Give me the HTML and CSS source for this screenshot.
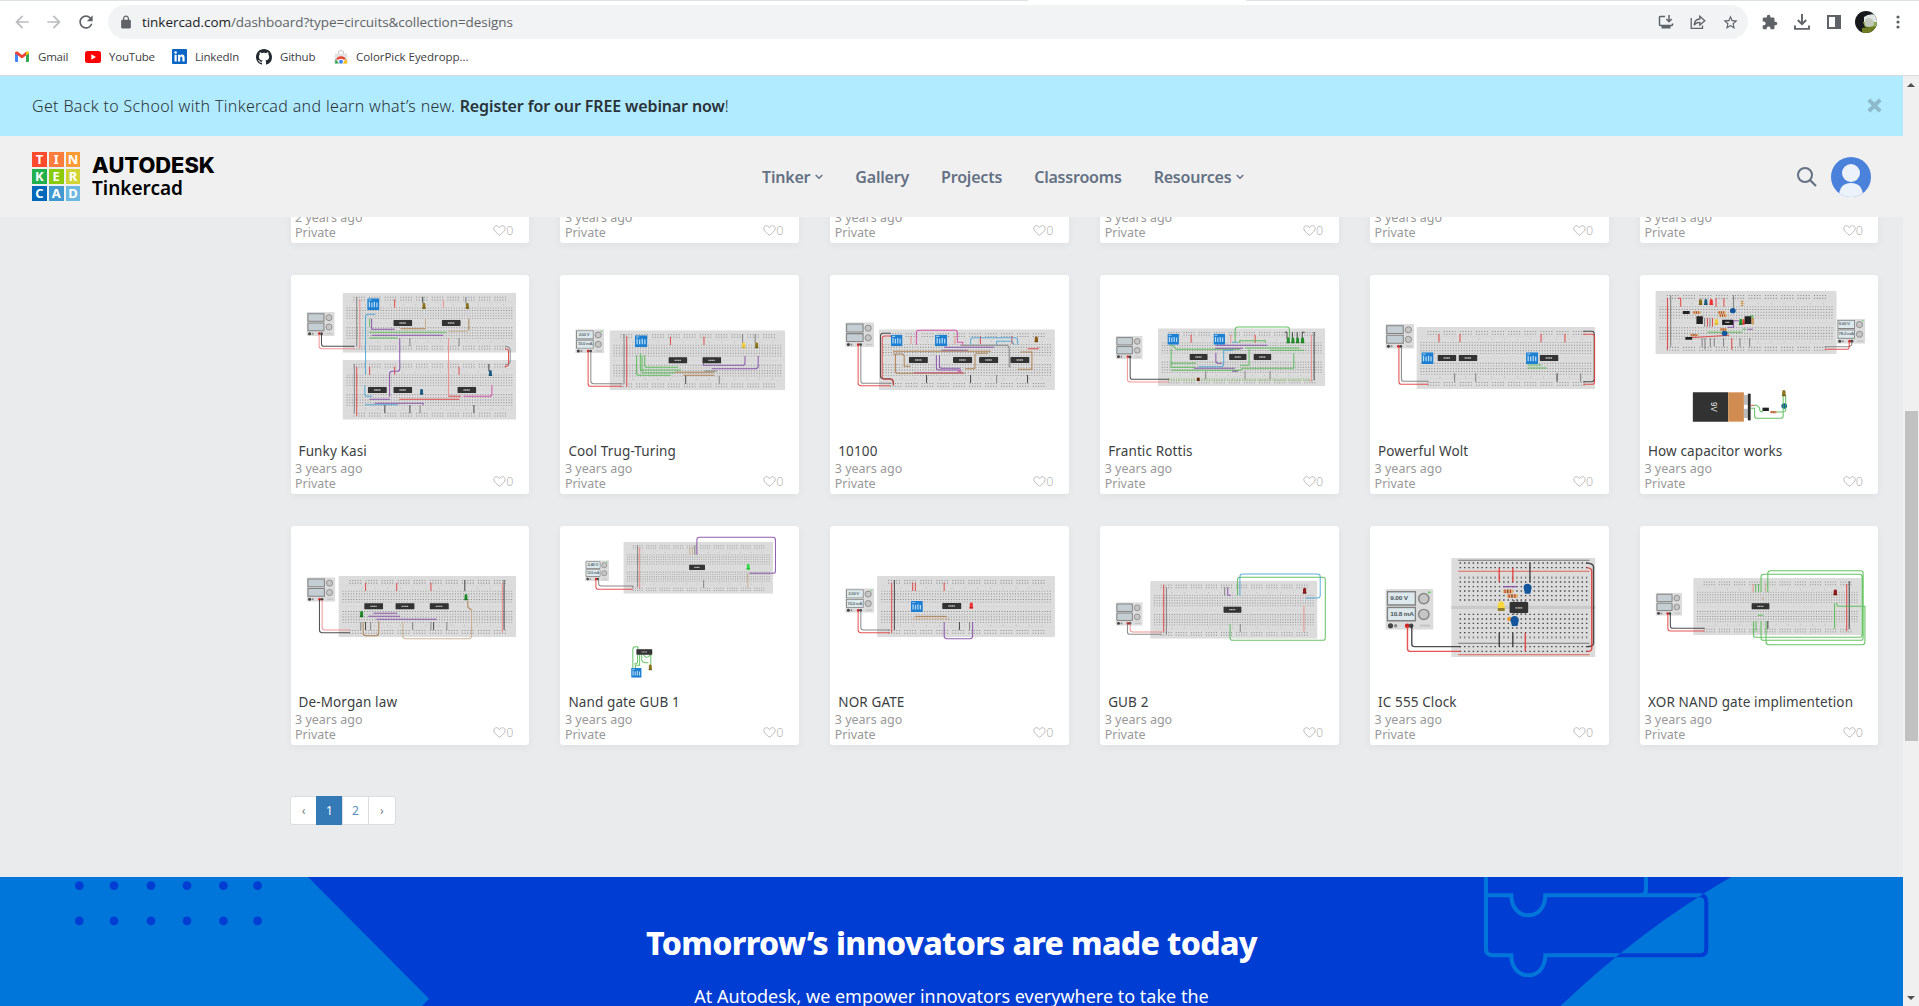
FILE: index.html
```html
<!DOCTYPE html>
<html lang="en">
<head>
<meta charset="utf-8">
<title>Dashboard | Tinkercad</title>
<link rel="stylesheet" href="styles.css">
</head>
<body>
<svg class="defs" aria-hidden="true">
  <symbol id="board" viewBox="0 0 512 180" preserveAspectRatio="none">
    <rect width="512" height="180" rx="3" fill="#dcdcdc"/>
    <path d="M12 28H500M12 150H500M12 90H500" stroke="#d3d3d3" stroke-width="1.5"/>
    <g fill="none" stroke="#a3a3a3" stroke-width="3">
      <path d="M12 45H502M12 61H502M12 77H502M12 113H502M12 137H502" stroke-dasharray="3 4.7"/>
      <path d="M12 53H502M12 69H502M12 105H502M12 121H502M12 129H502" stroke="#8a8a8a" stroke-dasharray="3 4.7"/>
      <path d="M32 13H485M32 21H485M32 161H485M32 169H485" stroke="#8e8e8e" stroke-dasharray="3 4.7 3 4.7 3 4.7 3 4.7 3 12.4"/>
      <path d="M66 36H480M66 146H480" stroke="#c2c2c2" stroke-width="4" stroke-dasharray="3 34"/>
    </g>
  </symbol>
  <symbol id="psu" viewBox="0 0 84 72" preserveAspectRatio="none">
    <rect width="84" height="72" rx="2" fill="#dcdcdc"/>
    <g fill="#c5cfd3" stroke="#828282" stroke-width="3"><path d="M4 5H52V28H4ZM4 33H52V56H4Z"/></g>
    <g fill="#c6c6c6" stroke="#858585" stroke-width="2.5"><circle cx="67" cy="17" r="9"/><circle cx="67" cy="45" r="9"/></g>
    <circle cx="9" cy="65" r="4.5" fill="#444"/><circle cx="18" cy="65" r="3" fill="#888"/>
    <circle cx="38" cy="65" r="4" fill="#c22"/><circle cx="45" cy="65" r="4" fill="#444"/>
    <path d="M60 65H78" stroke="#c6c6c6" stroke-width="4"/>
  </symbol>
  <symbol id="lit" viewBox="0 0 84 72" preserveAspectRatio="none">
    <use href="#psu" width="84" height="72"/>
    <path d="M5 6H51V27H5ZM5 34H51V55H5Z" fill="#dce8ec"/>
    <path d="M74 6H79" stroke="#6c6" stroke-width="3"/>
  </symbol>
  <symbol id="chip" viewBox="0 0 56 20" preserveAspectRatio="none">
    <path d="M3 1H54M3 19H54" stroke="#777" stroke-width="2" stroke-dasharray="3 4"/>
    <rect y="1" width="56" height="18" rx="2" fill="#333"/>
    <path d="M18 10H38" stroke="#bbb" stroke-width="4" stroke-dasharray="4 1"/>
  </symbol>
  <symbol id="dip" viewBox="0 0 34 34" preserveAspectRatio="none">
    <rect width="34" height="34" rx="1" fill="#1c7fd2"/>
    <path d="M6 10V26M13 12V26M20 10V26M27 12V26" stroke="#b9dcf5" stroke-width="3.5"/>
    <path d="M3 5H12" stroke="#9ccbf0" stroke-width="3"/>
  </symbol>
  <symbol id="led" viewBox="0 0 10 20" preserveAspectRatio="none">
    <path d="M1 6Q1 0 5 0T9 6V14H10V18H0V14H1Z"/>
    <path d="M0 15H10" stroke="#0003" stroke-width="3"/>
  </symbol>
  <symbol id="res" viewBox="0 0 24 10" preserveAspectRatio="none">
    <rect y="1" width="24" height="8" rx="3" fill="#d9b26c"/>
    <path d="M5 1V9M17 1V9" stroke="#c33" stroke-width="2.5"/><path d="M11 1V9" stroke="#733" stroke-width="2.5"/>
  </symbol>
  <symbol id="heart" viewBox="0 0 14 12">
    <path d="M7 11.2C3.5 8.4.8 6.4.8 3.8.8 2 2.1.8 3.8.8 5.2.8 6.3 1.600 7 3 7.700 1.600 8.800.8 10.200.8c1.700 0 3 1.200 3 3 0 2.600-2.700 4.600-6.200 7.400Z" fill="none" stroke="currentColor"/>
  </symbol>
  <symbol id="chevron" viewBox="0 0 8 6"><path d="M.7 1 4 4.300 7.300 1" fill="none" stroke="currentColor" stroke-width="1.400"/></symbol>
</svg>

<header class="browser">
  <div class="tabstrip"><i class="active-tab"></i></div>
  <div class="toolbar">
    <span class="tool faded"><svg width="20" height="20" viewBox="0 0 24 24"><path d="M20 11H7.830l5.590-5.590L12 4l-8 8 8 8 1.410-1.410L7.830 13H20z"/></svg></span>
    <span class="tool faded"><svg width="20" height="20" viewBox="0 0 24 24"><path d="M4 11h12.170l-5.590-5.590L12 4l8 8-8 8-1.410-1.410L16.170 13H4z"/></svg></span>
    <span class="tool"><svg width="20" height="20" viewBox="0 0 24 24"><path d="M17.650 6.350A7.958 7.958 0 0 0 12 4c-4.420 0-7.990 3.580-7.990 8s3.570 8 7.990 8c3.730 0 6.840-2.550 7.730-6h-2.080A5.990 5.990 0 0 1 12 18c-3.310 0-6-2.690-6-6s2.690-6 6-6c1.660 0 3.140.69 4.220 1.780L13 11h7V4z"/></svg></span>
    <div class="omnibox">
      <svg class="lock" width="12" height="14" viewBox="3 0 18 23"><path d="M18 8h-1V6c0-2.760-2.240-5-5-5S7 3.240 7 6v2H6c-1.100 0-2 .9-2 2v10c0 1.100.9 2 2 2h12c1.100 0 2-.9 2-2V10c0-1.100-.9-2-2-2zM15 8H9V6c0-1.660 1.340-3 3-3s3 1.340 3 3z"/></svg>
      <span class="url"><b>tinkercad.com</b>/dashboard?type=circuits&amp;collection=designs</span>
      <span class="tool"><svg width="16" height="16" viewBox="0 0 16 16"><path d="M7 2.500H2.200Q1.500 2.500 1.500 3.200V10.800Q1.500 11.500 2.200 11.500H13.800Q14.500 11.500 14.500 10.800V9.500M11 1V7.500M8.300 5 11 7.700 13.700 5" fill="none" stroke="currentColor" stroke-width="1.500"/><path d="M3.500 12H12.500V14.500H3.500Z"/></svg></span>
      <span class="tool"><svg width="16" height="16" viewBox="0 0 16 16"><path d="M1.200 4V14.300H12.500V11.500M4.200 11.200Q4.500 5.200 9.800 5V2.200L14.800 6.700 9.800 11V8.300Q6 8.200 4.200 11.200Z" fill="none" stroke="currentColor" stroke-width="1.300"/></svg></span>
      <span class="tool"><svg width="17" height="17" viewBox="0 0 24 24"><path d="M22 9.240l-7.190-.62L12 2 9.190 8.630 2 9.240l5.460 4.730L5.820 21 12 17.270 18.180 21l-1.630-7.030zM12 15.400l-3.760 2.270 1-4.280-3.320-2.880 4.380-.38L12 6.100l1.710 4.040 4.380.38-3.320 2.880 1 4.280z"/></svg></span>
    </div>
    <span class="tool"><svg width="16" height="16" viewBox="1 0 23 23"><path d="M20.500 11H19V7c0-1.100-.9-2-2-2h-4V3.500C13 2.120 11.880 1 10.500 1S8 2.120 8 3.500V5H4c-1.100 0-1.990.9-1.990 2v3.800H3.500c1.490 0 2.700 1.210 2.700 2.700s-1.210 2.700-2.700 2.700H2V20c0 1.100.9 2 2 2h3.800v-1.500c0-1.490 1.210-2.700 2.700-2.700s2.700 1.210 2.700 2.700V22H17c1.100 0 2-.9 2-2v-4h1.500c1.380 0 2.500-1.120 2.500-2.500S21.880 11 20.500 11z"/></svg></span>
    <span class="tool"><svg width="16" height="16" viewBox="0 0 16 16"><path d="M8 0V10M3.800 6 8 10.200 12.200 6M1 11.500V14.900H15V11.500" fill="none" stroke="currentColor" stroke-width="1.900"/></svg></span>
    <span class="tool"><svg width="14" height="14" viewBox="0 0 14 14"><path d="M0 0H14V14H0ZM2 2V12H8V2Z" fill-rule="evenodd"/></svg></span>
    <span class="tool"><svg width="22" height="22" viewBox="0 0 22 22"><clipPath id="face"><circle cx="11" cy="11" r="11"/></clipPath><g clip-path="url(#face)"><path fill="#17191c" d="M0 0H22V22H0Z"/><path fill="#dfe6e2" d="M9 6Q14 2 22 4V11H9Z"/><path fill="#8fae55" d="M8 11H22V16H10Z"/><path fill="#c3c8bd" d="M10 9Q14 5 18 9L19 14Q14 18 10 14Z"/><path fill="#6e7d21" d="M7 17 22 15V22H7Z"/></g></svg></span>
    <span class="tool"><svg width="4" height="16" viewBox="0 0 4 16"><circle cx="2" cy="3" r="1.600"/><circle cx="2" cy="8" r="1.600"/><circle cx="2" cy="13" r="1.600"/></svg></span>
  </div>
  <nav class="bookmarks">
    <span class="bm gm"><svg width="14" height="11" viewBox="0 0 14 11"><path fill="#4285f4" d="M0 2V10Q0 11 1 11H3V4Z"/><path fill="#34a853" d="M14 2V10Q14 11 13 11H11V4Z"/><path fill="#ea4335" d="M0 1.500Q1 0 2.500.6L7 4 11.500.6 11 4.500 7 7.500 3 4.500 0 2.500Z"/><path fill="#fbbc04" d="M11 1Q14 -.8 14 2.300L11 4.500Z"/></svg>Gmail</span>
    <span class="bm yt"><svg width="16" height="12" viewBox="0 0 16 12"><rect width="16" height="12" rx="2.500" fill="#f00"/><path fill="#fff" d="M6.300 3.300 11 6 6.300 8.700Z"/></svg>YouTube</span>
    <span class="bm li"><svg width="15" height="15" viewBox="0 0 15 15"><rect width="15" height="15" rx="1" fill="#0a66c2"/><g fill="#fff"><circle cx="3.600" cy="3.500" r="1.300"/><path d="M2.500 5.700H4.700V12.500H2.500ZM6 5.700H8.100V6.700Q8.700 5.500 10.200 5.500 12.600 5.500 12.600 8.500V12.500H10.400V9Q10.400 7.400 9.300 7.400 8.200 7.400 8.200 9V12.500H6Z"/></g></svg>LinkedIn</span>
    <span class="bm gh"><svg width="16" height="16" viewBox="0 0 16 16"><path fill="#24292f" d="M8 0C3.580 0 0 3.580 0 8c0 3.540 2.290 6.530 5.470 7.590.4.07.55-.17.55-.38 0-.19-.01-.82-.01-1.490-2.010.37-2.530-.49-2.690-.94-.09-.23-.48-.94-.82-1.130-.28-.15-.68-.52-.01-.53.63-.01 1.080.58 1.230.82.72 1.210 1.870.87 2.330.66.07-.52.28-.87.51-1.070-1.780-.2-3.640-.89-3.640-3.950 0-.87.31-1.590.82-2.150-.08-.2-.36-1.020.08-2.120 0 0 .67-.21 2.200.82.64-.18 1.320-.27 2-.27.68 0 1.360.09 2 .27 1.530-1.040 2.200-.82 2.200-.82.44 1.100.16 1.920.08 2.120.51.56.82 1.270.82 2.150 0 3.070-1.870 3.750-3.650 3.950.29.25.54.73.54 1.480 0 1.070-.01 1.930-.01 2.200 0 .21.15.46.55.38A8.013 8.013 0 0 0 16 8c0-4.420-3.580-8-8-8z"/></svg>Github</span>
    <span class="bm cp"><svg width="14" height="14" viewBox="0 0 14 14"><path d="M4.500 4V2Q4.500.7 7 .7T9.500 2V4" fill="none" stroke="#c4c4c4"/><path d="M1 3.500H13L14 13.500H0Z" fill="#e3e3e3"/><path fill="#ea4335" d="M2 9.500A5.500 5.500 0 0 1 12 9.500Z"/><path fill="#34a853" d="M1.500 9 5 13.500H1Z"/><path fill="#fbbc04" d="M12.500 9 8 13.500H13Z"/><circle cx="7" cy="11.500" r="2.700" fill="#fff"/><circle cx="7" cy="11.800" r="2" fill="#4285f4"/></svg>ColorPick Eyedropp...</span>
  </nav>
</header>

<div class="viewport">
  <div class="page">
    <div class="banner">
      <p>Get Back to School with Tinkercad and learn what’s new. <b>Register for our FREE webinar now</b>!</p>
      <svg class="close" width="15" height="15" viewBox="0 0 15 15"><path d="M1.800 1.800 13.200 13.200M13.200 1.800 1.800 13.200" stroke="#8db9ca" stroke-width="4"/></svg>
    </div>
    <div class="navbar">
      <div class="brand">
        <div class="tiles">
          <i class="t1">T</i><i class="t2">I</i><i class="t3">N</i>
          <i class="t4">K</i><i class="t5">E</i><i class="t6">R</i>
          <i class="t7">C</i><i class="t8">A</i><i class="t9">D</i>
        </div>
        <svg class="wordmark" width="126" height="49" viewBox="0 0 126 49">
          <text x="0" y="21" class="wm-a" textLength="123" lengthAdjust="spacingAndGlyphs">AUTODESK</text>
          <text x="0" y="43" class="wm-t" textLength="91" lengthAdjust="spacingAndGlyphs">Tinkercad</text>
        </svg>
      </div>
      <nav class="links">
        <a class="n1">Tinker<svg width="8" height="6"><use href="#chevron"/></svg></a>
        <a class="n2">Gallery</a>
        <a class="n3">Projects</a>
        <a class="n4">Classrooms</a>
        <a class="n5">Resources<svg width="8" height="6"><use href="#chevron"/></svg></a>
      </nav>
      <div class="account">
        <svg width="20" height="20" viewBox="0 0 20 20"><circle cx="8" cy="8" r="7" fill="none" stroke="#647084" stroke-width="2"/><path d="M13 13 19 19" stroke="#647084" stroke-width="2.200"/></svg>
        <svg width="40" height="40" viewBox="0 0 40 40"><clipPath id="av"><circle cx="20" cy="20" r="20"/></clipPath><g clip-path="url(#av)"><path fill="#4a81da" d="M0 0H40V40H0Z"/><g fill="#ebf2fb"><circle cx="20" cy="16" r="9"/><path d="M8 40Q8 26 20 26T32 40Z"/></g></g></svg>
      </div>
    </div>

    <main class="content">
      <div class="grid">
        <article class="card"><div class="meta">2 years ago<br>Private<span class="likes"><svg width="13" height="11"><use href="#heart"/></svg>0</span></div></article>
        <article class="card"><div class="meta">3 years ago<br>Private<span class="likes"><svg width="13" height="11"><use href="#heart"/></svg>0</span></div></article>
        <article class="card"><div class="meta">3 years ago<br>Private<span class="likes"><svg width="13" height="11"><use href="#heart"/></svg>0</span></div></article>
        <article class="card"><div class="meta">3 years ago<br>Private<span class="likes"><svg width="13" height="11"><use href="#heart"/></svg>0</span></div></article>
        <article class="card"><div class="meta">3 years ago<br>Private<span class="likes"><svg width="13" height="11"><use href="#heart"/></svg>0</span></div></article>
        <article class="card"><div class="meta">3 years ago<br>Private<span class="likes"><svg width="13" height="11"><use href="#heart"/></svg>0</span></div></article>

        <article class="card">
          <svg class="thumb" viewBox="32 15 704 498" preserveAspectRatio="none">
            <use href="#board" x="184" y="69" width="513" height="179"/><use href="#board" x="184" y="270" width="513" height="179"/>
            <use href="#psu" x="78" y="126" width="83" height="72"/>
            <path class="w gray" d="M226 81V228M383 204V228M528 204V228M219 282V430" /><path class="w black" d="M421 80V100M122 192V221Q122 229 130 229H219M309 405V429M383 405V429M572 405V429M616 282V304"/>
            <path class="w pink" d="M235 88V236M482 89V113M115 192V228Q115 236 123 236H220M497 204V379"/><path class="w red" d="M338 88V113M226 290V437M264 290V314M338 290V314M528 290V314M352 388H529M497 379H534M662 290Q674 290 674 282V242Q674 236 664 236"/>
            <path class="w gray" d="M664 229Q679 230 679 240V276Q678 284 664 284M548 82V100M413 405V429"/>
            <path class="w blue" d="M281 133H260Q252 133 252 141V314M250 346V372Q250 379 256 379H272M250 404H348"/>
            <path class="w green" d="M264 146V170M263 187H491M263 204H348"/><path class="w purple" d="M270 146V178H338M270 196H481M353 204V296Q353 304 345 304H332Q323 304 323 312V380M263 388H325M279 400H422V406"/>
            <path class="w tan" d="M429 146V176M497 184H550L557 178"/><path class="w brown" d="M355 176H429M557 146V180"/><path class="w magenta" d="M541 379H618Q625 379 625 372V346"/>
            <use href="#dip" x="257" y="85" width="36" height="35"/>
            <use href="#chip" x="334" y="149" width="56" height="20"/><use href="#chip" x="477" y="149" width="56" height="20"/><use href="#chip" x="259" y="350" width="56" height="20"/><use href="#chip" x="334" y="350" width="56" height="20"/><use href="#chip" x="523" y="350" width="56" height="20"/>
            <g fill="#8a7420"><use href="#led" x="419" y="98" width="11" height="21"/><use href="#led" x="547" y="98" width="11" height="21"/></g><g fill="#1f5f87"><use href="#led" x="615" y="300" width="11" height="20"/><use href="#led" x="412" y="356" width="11" height="20"/></g>
          </svg>
          <h3>Funky Kasi</h3><div class="meta">3 years ago<br>Private<span class="likes"><svg width="13" height="11"><use href="#heart"/></svg>0</span></div>
        </article>

        <article class="card">
          <svg class="thumb" viewBox="831 15 704 498" preserveAspectRatio="none">
            <use href="#board" x="977" y="181" width="519" height="180"/><use href="#lit" x="876" y="178" width="85" height="72"/>
            <text class="lcd" x="886" y="199">2.00 V</text><text class="lcd" x="884" y="226">15.0 mA</text>
            <path class="w gray" d="M922 244V333Q922 341 930 341H1015M1020 192V341M1370 192V220M1407 192V220M1301 317V341"/><path class="w black" d="M1202 317V341"/>
            <path class="w red" d="M914 244V341Q914 349 922 349H1015M1028 199V350M1157 200V225M1256 200V225"/>
            <path class="w green" d="M1057 256V308Q1057 316 1065 316H1158M1068 250V296L1075 308H1170M1073 256V300H1188M1081 256V284Q1081 292 1089 292H1180"/>
            <path class="w brown" d="M1170 307H1286M1195 316H1286"/><path class="w gray" d="M1257 303H1294"/><path class="w purple" d="M1254 280V286H1370Q1377 286 1377 278V258M1279 296H1409Q1416 296 1416 288V258"/>
            <use href="#dip" x="1052" y="196" width="37" height="35"/><use href="#chip" x="1151" y="261" width="56" height="20"/><use href="#chip" x="1251" y="261" width="56" height="20"/>
            <use href="#led" x="1367" y="217" width="12" height="20" fill="#f2cf3a"/><use href="#led" x="1406" y="217" width="11" height="20" fill="#8a7420"/>
          </svg>
          <h3>Cool Trug-Turing</h3><div class="meta">3 years ago<br>Private<span class="likes"><svg width="13" height="11"><use href="#heart"/></svg>0</span></div>
        </article>

        <article class="card">
          <svg class="thumb" viewBox="33 15 704 498" preserveAspectRatio="none">
            <use href="#board" x="177" y="178" width="520" height="182"/><use href="#psu" x="78" y="157" width="85" height="74"/>
            <path class="w black" d="M212 190H190Q182 190 182 198V318Q182 326 190 326H212L220 334V346M318 315V339M448 315V339M616 315V339"/><path class="w gray" d="M124 225V332Q124 340 132 340H214M525 315V339M558 226H418M553 226Q562 226 562 236V290H566"/>
            <path class="w red" d="M116 225V339Q116 347 124 347H212M216 198H195Q187 198 187 206V320Q187 328 196 328H218L221 346M477 198V222M570 198V222M616 236H647V232"/><path class="w pink" d="M272 198V222M402 198V222M360 198V222"/>
            <path class="w magenta" d="M288 224V189Q288 181 296 181H402Q409 181 409 189V217H425V225M280 308H425L410 302"/>
            <path class="w purple" d="M370 232H517M362 241H440M347 256V292Q347 300 355 300H420M356 256V287Q356 295 364 295H418"/>
            <path class="w brown" d="M219 244H508M226 252V302Q226 310 234 310H432M219 252H245Q252 252 252 260V289H270M462 250H500M461 252V296M432 296H461M587 298H629V246H595"/>
            <path class="w blue" d="M448 224V211Q448 203 456 203H580Q587 203 587 211V224M525 224V214H570L577 224"/>
            <use href="#dip" x="213" y="194" width="34" height="35"/><use href="#dip" x="343" y="194" width="36" height="35"/>
            <use href="#chip" x="266" y="260" width="56" height="20"/><use href="#chip" x="396" y="260" width="57" height="20"/><use href="#chip" x="473" y="260" width="57" height="20"/><use href="#chip" x="565" y="260" width="57" height="20"/>
            <use href="#led" x="636" y="199" width="12" height="20" fill="#8a5c16"/>
          </svg>
          <h3>10100</h3><div class="meta">3 years ago<br>Private<span class="likes"><svg width="13" height="11"><use href="#heart"/></svg>0</span></div>
        </article>

        <article class="card">
          <svg class="thumb" viewBox="828 15 704 498" preserveAspectRatio="none">
            <use href="#board" x="999" y="175" width="494" height="174"/><use href="#psu" x="874" y="198" width="80" height="69"/>
            <path d="M1030 329H1450" stroke="#9fc27a" stroke-width="10" stroke-dasharray="3 4.500" opacity=".7"/>
            <path class="w black" d="M917 262V320Q917 328 925 328H1032M1374 187H1380V206M1396 187V206M1410 187V206M1432 187H1425V206M1460 186V330"/><path class="w gray" d="M1140 304V328M1256 304V328M1330 304V328"/>
            <path class="w pink" d="M909 262V328Q909 336 917 336H1032M1214 194V218M1452 194V336"/><path class="w red" d="M1097 194V218M1286 194V218"/>
            <path class="w green" d="M1227 217V179Q1227 171 1235 171H1380Q1387 171 1387 179V206M1240 218V212H1316V218M1034 227H1044L1053 238H1242M1257 234H1417M1329 241H1431M1038 236V280H1112M1038 240V292H1110M1038 301H1242L1248 295H1400V250M1268 238V286H1242"/>
            <path class="w purple" d="M1170 226H1322M1168 235H1250M1170 248V272Q1170 280 1178 280H1189M1105 295H1226M1218 304H1235"/><path class="w blue" d="M1222 241H1193V282Q1193 290 1186 290H1118M1218 217H1236"/>
            <use href="#dip" x="1027" y="191" width="34" height="33"/><use href="#dip" x="1163" y="191" width="34" height="33"/>
            <use href="#chip" x="1092" y="251" width="54" height="20"/><use href="#chip" x="1209" y="251" width="52" height="20"/><use href="#chip" x="1281" y="251" width="53" height="20"/>
            <g fill="#22902b"><use href="#led" x="1378" y="202" width="11" height="20"/><use href="#led" x="1392" y="202" width="11" height="20"/><use href="#led" x="1406" y="202" width="11" height="20"/><use href="#led" x="1420" y="202" width="12" height="20"/></g><path fill="#621" d="M1114 323H1122V333H1114Z"/>
          </svg>
          <h3>Frantic Rottis</h3><div class="meta">3 years ago<br>Private<span class="likes"><svg width="13" height="11"><use href="#heart"/></svg>0</span></div>
        </article>

        <article class="card">
          <svg class="thumb" viewBox="27 15 668 498" preserveAspectRatio="none">
            <use href="#board" x="157" y="171" width="501" height="186"/><use href="#psu" x="70" y="162" width="81" height="74"/>
            <path class="w gray" d="M115 230V326Q115 334 123 334H191M264 310V335M323 310V335M617 310V335"/><path class="w black" d="M551 310V335M624 184H648Q655 184 655 192V327Q655 335 648 335H624"/>
            <path class="w red" d="M108 230V335Q108 343 116 343H191M220 192V217M279 192V217M506 192V217M573 192V217M624 193H648Q656 193 656 201V335Q656 343 648 343H624"/><path class="w green" d="M468 285H507M468 294H522"/>
            <use href="#dip" x="171" y="247" width="34" height="35"/><use href="#dip" x="464" y="247" width="34" height="35"/>
            <use href="#chip" x="216" y="254" width="53" height="20"/><use href="#chip" x="275" y="254" width="53" height="20"/><use href="#chip" x="502" y="254" width="53" height="20"/>
          </svg>
          <h3>Powerful Wolt</h3><div class="meta">3 years ago<br>Private<span class="likes"><svg width="13" height="11"><use href="#heart"/></svg>0</span></div>
        </article>

        <article class="card">
          <svg class="thumb" viewBox="785 15 668 498" preserveAspectRatio="none">
            <use href="#board" x="828" y="63" width="508" height="189"/><use href="#lit" x="1336" y="146" width="80" height="75"/>
            <text class="lcd" x="1341" y="166">9.00 V</text><text class="lcd" x="1341" y="195">78.2 mA</text>
            <path class="w gray" d="M871 76V230M1047 76V116M959 204V230M967 204V238M982 204V230M993 204V230M1019 204V230M1065 204V230M1092 204V230M966 144V170M981 144V170M1378 214V224Q1376 230 1366 230H1302"/>
            <path class="w red" d="M862 84V239M892 85H899V110M998 85V110M1020 85V110M1042 204V239M974 144V170M988 144V170M1371 214V230Q1371 238 1362 238H1302M925 203L1035 196"/>
            <path class="w green" d="M974 187H1072M1092 137H1101V150M1072 178H1083"/><path class="w purple" d="M1062 152H1047V172H1030M1086 178H1101"/>
            <g fill="#8a7420"><use href="#led" x="949" y="87" width="11" height="20"/></g><use href="#led" x="964" y="87" width="11" height="20" fill="#1f5f87"/><use href="#led" x="979" y="87" width="11" height="20" fill="#f33"/><use href="#led" x="993" y="146" width="12" height="21" fill="#f2cf3a"/><use href="#led" x="1062" y="146" width="11" height="21" fill="#22902b"/><use href="#led" x="1071" y="147" width="8" height="19" fill="#f33"/>
            <path fill="#222" d="M905 123H924V132H905ZM912 201H931V209H912ZM943 139H961V162H943ZM1078 139H1097V162H1078ZM1015 149H1046V165H1015Z"/><path d="M1024 157H1036" stroke="#aaa" stroke-width="4"/>
            <use href="#res" x="932" y="123" width="24" height="9"/><use href="#res" x="1002" y="123" width="24" height="9"/><use href="#res" x="1005" y="132" width="24" height="9"/><use href="#res" x="925" y="191" width="24" height="9"/><use href="#res" x="1008" y="174" width="22" height="9"/><path d="M1071 92V110M1101 145V164" stroke="#c98f43" stroke-width="7" stroke-dasharray="4 2"/>
            <g fill="#14569c"><circle cx="1045" cy="122" r="8"/><circle cx="1022" cy="190" r="8"/><circle cx="1189" cy="408" r="8"/></g>
            <path fill="#323232" d="M933 367H1032V455H933Z"/><path fill="#d18d51" d="M1032 367H1076V455H1032Z"/><path fill="#bbb" d="M1076 375H1087V404H1076ZM1076 416H1087V444H1076Z"/><path fill="#2b2b2b" d="M1087 371H1095V451H1087Z"/>
            <text class="nine" transform="translate(983 411) rotate(90)">9V</text>
            <path class="w red" d="M1095 406H1105"/><path class="w green" d="M1103 406H1112L1120 414V420Q1122 426 1130 426M1095 415H1106V437Q1106 445 1114 445H1178Q1186 445 1186 437V378M1193 378V420Q1192 426 1184 426H1168"/>
            <path fill="#222" d="M1128 413H1146V423H1128Z"/><use href="#res" x="1149" y="422" width="20" height="9"/><use href="#led" x="1182" y="360" width="12" height="21" fill="#8a7420"/>
          </svg>
          <h3>How capacitor works</h3><div class="meta">3 years ago<br>Private<span class="likes"><svg width="13" height="11"><use href="#heart"/></svg>0</span></div>
        </article>

        <article class="card">
          <svg class="thumb" viewBox="32 18 704 498" preserveAspectRatio="none">
            <use href="#board" x="172" y="168" width="525" height="183"/><use href="#psu" x="78" y="172" width="85" height="73"/>
            <path class="w black" d="M116 240V330Q116 338 124 338H206M545 180V214M453 306V330M252 306V330M661 180V330"/><path class="w gray" d="M238 306V330M267 306V330M391 306V330M445 306V330M492 306V330"/>
            <path class="w pink" d="M124 240V322Q124 330 132 330H206M656 188V338"/><path class="w red" d="M252 188V213M344 188V213M445 188V213"/>
            <path class="w purple" d="M275 280H346M260 289H354M284 298H462"/><path class="w brown" d="M245 306V339Q245 347 253 347H283Q291 347 291 339V304M554 242V262L565 270"/><path class="w tan" d="M362 306V348Q362 356 370 356H557Q565 356 565 348V266"/>
            <use href="#chip" x="248" y="249" width="56" height="20"/><use href="#chip" x="340" y="249" width="57" height="20"/><use href="#chip" x="441" y="249" width="57" height="20"/>
            <g fill="#1e8a2a"><use href="#led" x="235" y="272" width="11" height="22"/><use href="#led" x="543" y="222" width="11" height="21"/></g>
          </svg>
          <h3>De-Morgan law</h3><div class="meta">3 years ago<br>Private<span class="likes"><svg width="13" height="11"><use href="#heart"/></svg>0</span></div>
        </article>

        <article class="card">
          <svg class="thumb" viewBox="831 18 704 498" preserveAspectRatio="none">
            <use href="#board" x="1018" y="66" width="442" height="155"/><use href="#lit" x="905" y="121" width="71" height="62"/>
            <text class="lcd" x="912" y="139">2.40 V</text><text class="lcd small" x="911" y="163">12.0 mA</text>
            <path class="w gray" d="M1060 76V202M1255 181V203M1229 76V104M945 178V190Q945 198 953 198H1046V204"/><path class="w red" d="M937 178V200Q937 208 945 208H1046"/><path class="w pink" d="M1066 82V208"/>
            <path class="w tan" d="M1214 82V104M1222 82V104M1385 160V203"/><path class="w purple" d="M1235 104V60Q1235 52 1243 52H1459Q1467 52 1467 60V152Q1467 160 1459 160H1390"/>
            <use href="#chip" x="1212" y="133" width="47" height="18"/><use href="#led" x="1381" y="131" width="11" height="20" fill="#2fdc46"/>
            <path class="w green" d="M1061 390V380H1053Q1046 380 1046 388V444M1050 432Q1060 432 1060 424V404M1054 444V436H1066V404M1072 404V418Q1074 428 1084 428H1092M1078 404Q1084 416 1092 410L1099 404V436"/>
            <use href="#chip" x="1056" y="387" width="48" height="18"/><use href="#dip" x="1041" y="444" width="31" height="29"/><use href="#led" x="1092" y="433" width="11" height="20" fill="#8a7420"/>
          </svg>
          <h3>Nand gate GUB 1</h3><div class="meta">3 years ago<br>Private<span class="likes"><svg width="13" height="11"><use href="#heart"/></svg>0</span></div>
        </article>

        <article class="card">
          <svg class="thumb" viewBox="33 18 704 498" preserveAspectRatio="none">
            <use href="#board" x="172" y="168" width="525" height="183"/><use href="#lit" x="78" y="205" width="85" height="73"/>
            <text class="lcd" x="87" y="226">2.00 V</text><text class="lcd" x="85" y="254">15.0 mA</text>
            <path class="w black" d="M223 180V330M415 306V330"/><path class="w gray" d="M124 272V322Q124 330 132 330H210M445 306V330"/><path class="w red" d="M116 272V330Q116 338 124 338H210M215 188V338M277 188V213M285 188V213M370 188V213"/>
            <path class="w brown" d="M284 289H378"/><path class="w tan" d="M277 297H386"/><path class="w purple" d="M370 306V348Q370 356 378 356H447Q454 356 454 348V306"/>
            <use href="#dip" x="272" y="243" width="35" height="33"/><use href="#chip" x="364" y="248" width="57" height="20"/><use href="#led" x="444" y="247" width="12" height="21" fill="#ee3030"/>
          </svg>
          <h3>NOR GATE</h3><div class="meta">3 years ago<br>Private<span class="likes"><svg width="13" height="11"><use href="#heart"/></svg>0</span></div>
        </article>

        <article class="card">
          <svg class="thumb" viewBox="828 18 704 498" preserveAspectRatio="none">
            <use href="#board" x="976" y="183" width="494" height="173"/><use href="#psu" x="874" y="247" width="80" height="70"/>
            <path class="w gray" d="M909 310V335Q909 343 917 343H1010M1024 202V343M1196 202V227M1242 312V336"/><path class="w pink" d="M917 310V328Q917 336 925 336H1012M1430 258V336"/><path class="w red" d="M1016 194V336"/>
            <path class="w purple" d="M1205 202V226H1214"/><path class="w green" d="M1234 227V180Q1234 172 1242 172H1486Q1493 172 1493 180V353Q1493 361 1486 361H1220Q1212 361 1212 353V312"/><path class="w blue" d="M1241 227V170Q1241 162 1249 162H1470Q1478 162 1478 170V226Q1478 234 1470 234H1436"/>
            <use href="#chip" x="1192" y="259" width="54" height="20"/><use href="#led" x="1426" y="203" width="12" height="20" fill="#8f1d1d"/>
          </svg>
          <h3>GUB 2</h3><div class="meta">3 years ago<br>Private<span class="likes"><svg width="13" height="11"><use href="#heart"/></svg>0</span></div>
        </article>

        <article class="card">
          <svg class="thumb" viewBox="27 18 668 498" preserveAspectRatio="none">
            <rect x="255" y="114" width="403" height="297" fill="#dcdcdc"/><path d="M255 262H658" stroke="#cacaca" stroke-width="10"/>
            <g fill="none" stroke="#444" stroke-width="4"><path d="M278 129H640M278 143H640M278 186H640M278 200H640M278 213H640M278 227H640M278 240H640M278 283H640M278 297H640M278 310H640M278 324H640M278 338H640M278 380H640M278 394H640" stroke-dasharray="4 8.200"/></g>
            <path d="M278 173H640M278 352H640" stroke="#888" stroke-width="7" stroke-dasharray="4 8.200"/>
            <path d="M274 121H642M274 370H642" stroke="#777" stroke-width="3"/><path d="M274 154H642M274 404H642" stroke="#d65" stroke-width="3"/>
            <use href="#lit" x="70" y="207" width="135" height="122"/><text class="lcd big" x="84" y="241">9.00 V</text><text class="lcd big" x="84" y="287">10.8 mA</text>
            <path class="w black t" d="M144 318V372Q144 380 152 380H280M475 128V186M389 338V380M427 338V380M634 129Q652 130 653 140V370Q652 380 634 380"/><path class="w red t" d="M132 318V386Q132 394 140 394H280M389 143V186M427 143V186M462 338V394M634 143Q648 144 648 154V386Q648 394 634 394"/>
            <path class="w purple t" d="M401 200H438"/><use href="#res" x="399" y="207" width="30" height="14"/><use href="#res" x="410" y="221" width="32" height="14"/>
            <path d="M430 240V284M440 240V284M451 240V284M462 240V284" stroke="#777" stroke-width="4"/><rect x="418" y="246" width="52" height="33" rx="3" fill="#333"/><text class="ic" x="434" y="267">555</text>
            <path d="M385 272V258Q385 244 394 244T404 258V272Z" fill="#f8d83c"/><path d="M385 264H404V273H385Z" fill="#8f8130"/><circle cx="418" cy="297" r="7" fill="#f29a35"/><g fill="#14569c"><path d="M457 202Q458 191 468 191T480 202L476 221H461ZM420 300Q422 288 432 288T444 300L440 318H425Z"/></g>
          </svg>
          <h3>IC 555 Clock</h3><div class="meta">3 years ago<br>Private<span class="likes"><svg width="13" height="11"><use href="#heart"/></svg>0</span></div>
        </article>

        <article class="card">
          <svg class="thumb" viewBox="785 18 668 498" preserveAspectRatio="none">
            <use href="#board" x="934" y="174" width="471" height="172"/><use href="#psu" x="829" y="218" width="74" height="69"/>
            <path class="w black" d="M870 282V317Q870 325 878 325H966M1143 303V326M1371 184V326"/><path class="w red" d="M863 282V325Q863 333 871 333H966M1364 192V334"/><path class="w pink" d="M1102 192V217"/>
            <path class="w green" d="M1109 192V217M1117 192V217M1124 216V171Q1124 163 1132 163H1400Q1407 163 1407 171V344Q1407 352 1400 352H1110Q1103 352 1103 344V304M1143 217V160Q1143 152 1151 152H1403Q1410 152 1410 160V353Q1410 361 1403 361H1131Q1124 361 1124 353V304M1138 304V366Q1138 374 1146 374H1408Q1415 374 1415 366V259H1343Q1336 259 1336 248M1330 250V326M1110 304V334M1115 286H1131"/><path class="w tan" d="M1137 190V217M1129 232V240"/>
            <use href="#chip" x="1097" y="249" width="51" height="20"/><use href="#led" x="1326" y="208" width="12" height="20" fill="#8f1d1d"/>
          </svg>
          <h3>XOR NAND gate implimentetion</h3><div class="meta">3 years ago<br>Private<span class="likes"><svg width="13" height="11"><use href="#heart"/></svg>0</span></div>
        </article>
      </div>
      <ul class="pager"><li class="dim">‹</li><li class="on">1</li><li class="two">2</li><li>›</li></ul>
    </main>

    <footer class="hero">
      <svg class="art" width="1903" height="129" viewBox="0 877 1903 129">
        <path fill="#0076db" d="M0 877H308L429 998.700 422 1006H0Z"/>
        <g fill="#003dd3"><circle cx="79.300" cy="885.600" r="4.400"/><circle cx="114" cy="885.600" r="4.400"/><circle cx="151" cy="885.600" r="4.400"/><circle cx="187" cy="885.600" r="4.400"/><circle cx="223.400" cy="885.600" r="4.400"/><circle cx="257.600" cy="885.600" r="4.400"/><circle cx="79.300" cy="920.800" r="4.400"/><circle cx="114" cy="920.800" r="4.400"/><circle cx="151" cy="920.800" r="4.400"/><circle cx="187" cy="920.800" r="4.400"/><circle cx="223.400" cy="920.800" r="4.400"/><circle cx="257.600" cy="920.800" r="4.400"/></g>
        <clipPath id="swoop"><path d="M1731 877Q1640 930 1560.500 1006H1903V877Z"/></clipPath>
        <g id="brick" fill="none" stroke="#0076db" stroke-width="4"><path d="M1486 876V949Q1486 955.300 1493 955.300H1511.300C1511.300 982 1545.300 982 1545.300 955.300H1700Q1706.300 955.300 1706.300 949V902Q1706.300 895.300 1700 895.300H1545.300C1545.300 922 1511.300 922 1511.300 895.300H1486M1646 876V890Q1646 895.300 1640 895.300"/></g>
        <path fill="#0076db" d="M1731 877Q1640 930 1560.500 1006H1903V877Z"/>
        <g clip-path="url(#swoop)" fill="none" stroke="#003dd3" stroke-width="4"><path d="M1545.300 955.300H1700Q1706.300 955.300 1706.300 949V902Q1706.300 895.300 1700 895.300H1545.300"/></g>
      </svg>
      <h2>Tomorrow’s innovators are made today</h2>
      <p>At Autodesk, we empower innovators everywhere to take the</p>
    </footer>
  </div>
  <aside class="scrollbar"><i class="up"></i><i class="thumb-bar"></i><i class="down"></i></aside>
</div>
</body>
</html>
```
FILE: styles.css
```css
* { box-sizing: border-box; }
body { margin: 0; width: 1919px; height: 1006px; overflow: hidden; background: #fff; font-family: "Noto Sans", "Open Sans", sans-serif; }
p, h2, h3, ul { margin: 0; padding: 0; }
svg { display: block; flex: none; }
i { font-style: normal; }
.defs { position: absolute; width: 0; height: 0; }

/* browser chrome */
.browser { height: 76px; border-bottom: 1px solid #d9dbde; font-family: "Open Sans", "Noto Sans", sans-serif; }
.tabstrip { height: 1px; background: #dee1e6; display: flex; }
.active-tab { width: 218px; margin-left: 1028px; background: #fff; }
.toolbar { height: 42px; display: flex; align-items: center; gap: 8px; padding: 0 9px 0 10px; }
.tool { width: 24px; height: 24px; flex: none; display: flex; align-items: center; justify-content: center; color: #5f6368; }
.tool svg, .lock { fill: currentColor; }
.faded { color: #babcbe; }
.omnibox { flex: 1; height: 34px; margin: 0 2px; padding: 0 6px 0 12px; border-radius: 17px; background: #f1f3f4; display: flex; align-items: center; gap: 8px; color: #5f6368; }
.url { flex: 1; margin-left: 2px; font-size: 13.5px; letter-spacing: -.05px; }
.url b { font-weight: 400; color: #202124; }
.bookmarks { display: flex; align-items: center; height: 27px; padding-left: 15px; font-size: 11.5px; color: #3c4043; }
.bm { display: flex; align-items: center; gap: 8px; letter-spacing: -.2px; }
.cp { letter-spacing: -.05px; }
.gm { width: 70px; gap: 9px; } .yt { width: 87px; } .li { width: 84px; } .gh { width: 78px; }

/* page */
.viewport { display: flex; height: 930px; }
.page { width: 1903px; display: flex; flex-direction: column; background: #eaebed; }
.banner { height: 60px; flex: none; padding: 0 21px 1px 32px; background: #b0ebff; display: flex; align-items: center; justify-content: space-between; font-size: 16px; color: #2b3238; }
.banner p { font-weight: 300; letter-spacing: .34px; }
.banner b { font-weight: 600; letter-spacing: -.12px; }
.navbar { height: 81px; flex: none; padding: 0 32px; background: #f0f0f0; display: grid; grid-template-columns: 730px 1fr auto; align-items: center; }
.brand { display: flex; gap: 11.500px; }
.tiles { width: 48.5px; height: 49px; display: grid; grid-template: repeat(3, 1fr) / repeat(3, 1fr); gap: 2px; }
.tiles i { display: flex; align-items: center; justify-content: center; color: #fff; font: 700 13px/15px "Noto Sans", sans-serif; }
.t1 { background: #ff4a2e; } .t2 { background: #ff7d3c; } .t3 { background: #ff9b35; }
.t4 { background: #22b04f; } .t5 { background: #8cca0c; } .t6 { background: #d2d436; }
.t7 { background: #0068bb; } .t8 { background: #4299d2; } .t9 { background: #6bb8e0; }
.wm-a { font: 800 21px "Inter", "Open Sans", sans-serif; }
.wm-t { font: 600 20.5px "Noto Sans", sans-serif; }
.links { display: flex; gap: 32px; font-size: 16px; font-weight: 600; color: #647084; letter-spacing: -.2px; }
.links a { display: flex; align-items: center; gap: 5px; }
.account { display: flex; align-items: center; gap: 14px; }

.content { height: 660px; overflow: hidden; display: flex; flex-direction: column; justify-content: flex-end; padding: 0 24px 52px 290.5px; }
.grid { display: grid; grid-template-columns: repeat(6, 238.5px); gap: 32px 31.4px; flex: none; }
.card { height: 219px; background: #fff; border-radius: 3px; box-shadow: 0 2px 8px rgba(0, 0, 0, .05); display: flex; flex-direction: column; justify-content: flex-end; padding-bottom: 3px; }
.thumb { width: 238.5px; height: 166px; }
.card h3 { height: 20px; padding-left: 8px; font-size: 13.5px; line-height: 20px; font-weight: 400; letter-spacing: .12px; color: #3c3f42; white-space: nowrap; }
.meta { position: relative; height: 30px; padding-left: 4.5px; font-size: 12.5px; line-height: 15px; color: #999; font-weight: 400; }
.likes { position: absolute; right: 15.5px; bottom: 2px; display: flex; align-items: center; color: #b5b5b5; font-weight: 300; }
.w { fill: none; stroke-width: 3; opacity: .85; }
.t { stroke-width: 4; }
.black { stroke: #303030; } .gray { stroke: #777; } .red { stroke: #e33636; } .pink { stroke: #f08686; }
.blue { stroke: #42a2d6; } .green { stroke: #4cb84a; } .purple { stroke: #7f42a4; } .brown { stroke: #a8743f; }
.tan { stroke: #c7a987; } .magenta { stroke: #d63fa0; }
.lcd { font: 700 13px "Liberation Sans", sans-serif; fill: #6b7478; letter-spacing: -1px; }
.small { font-size: 11px; }
.big { font-size: 18px; fill: #4c5558; letter-spacing: -.5px; }
.nine { font: 24px "Liberation Sans", sans-serif; fill: #eee; text-anchor: middle; }
.ic { font: 11px "Liberation Mono", monospace; fill: #ddd; }

.pager { flex: none; display: flex; list-style: none; margin: 51px 0 0 -.5px; height: 29px; font-size: 12px; color: #707f8c; }
.pager li { width: 27px; border: 1px solid #ddd; margin-left: -1px; background: #fff; display: flex; align-items: center; justify-content: center; }
.pager li:first-child { margin-left: 0; border-radius: 3px 0 0 3px; }
.pager li:last-child { width: 27.5px; border-radius: 0 3px 3px 0; }
.pager .on { background: #337ab7; border-color: #337ab7; color: #fff; }
.pager .two { color: #5a8fc0; }

.hero { position: relative; height: 129px; flex: none; overflow: hidden; background: #003dd3; color: #fff; text-align: center; padding-top: 43px; }
.art { position: absolute; left: 0; top: 0; }
.hero h2, .hero p { position: relative; white-space: nowrap; }
.hero h2 { font-size: 32px; line-height: 46px; font-weight: 800; letter-spacing: -.65px; }
.hero p { margin-top: 17px; font-size: 18px; line-height: 26px; }

.scrollbar { width: 16px; background: #f0f0f0; display: flex; flex-direction: column; align-items: center; }
.up, .down { border: 4px solid transparent; }
.up { margin-top: 3px; border-bottom-color: #505050; }
.thumb-bar { width: 13px; height: 330px; margin-top: 324px; background: #c1c1c1; }
.down { margin-top: 255px; border-top-color: #505050; }
```
